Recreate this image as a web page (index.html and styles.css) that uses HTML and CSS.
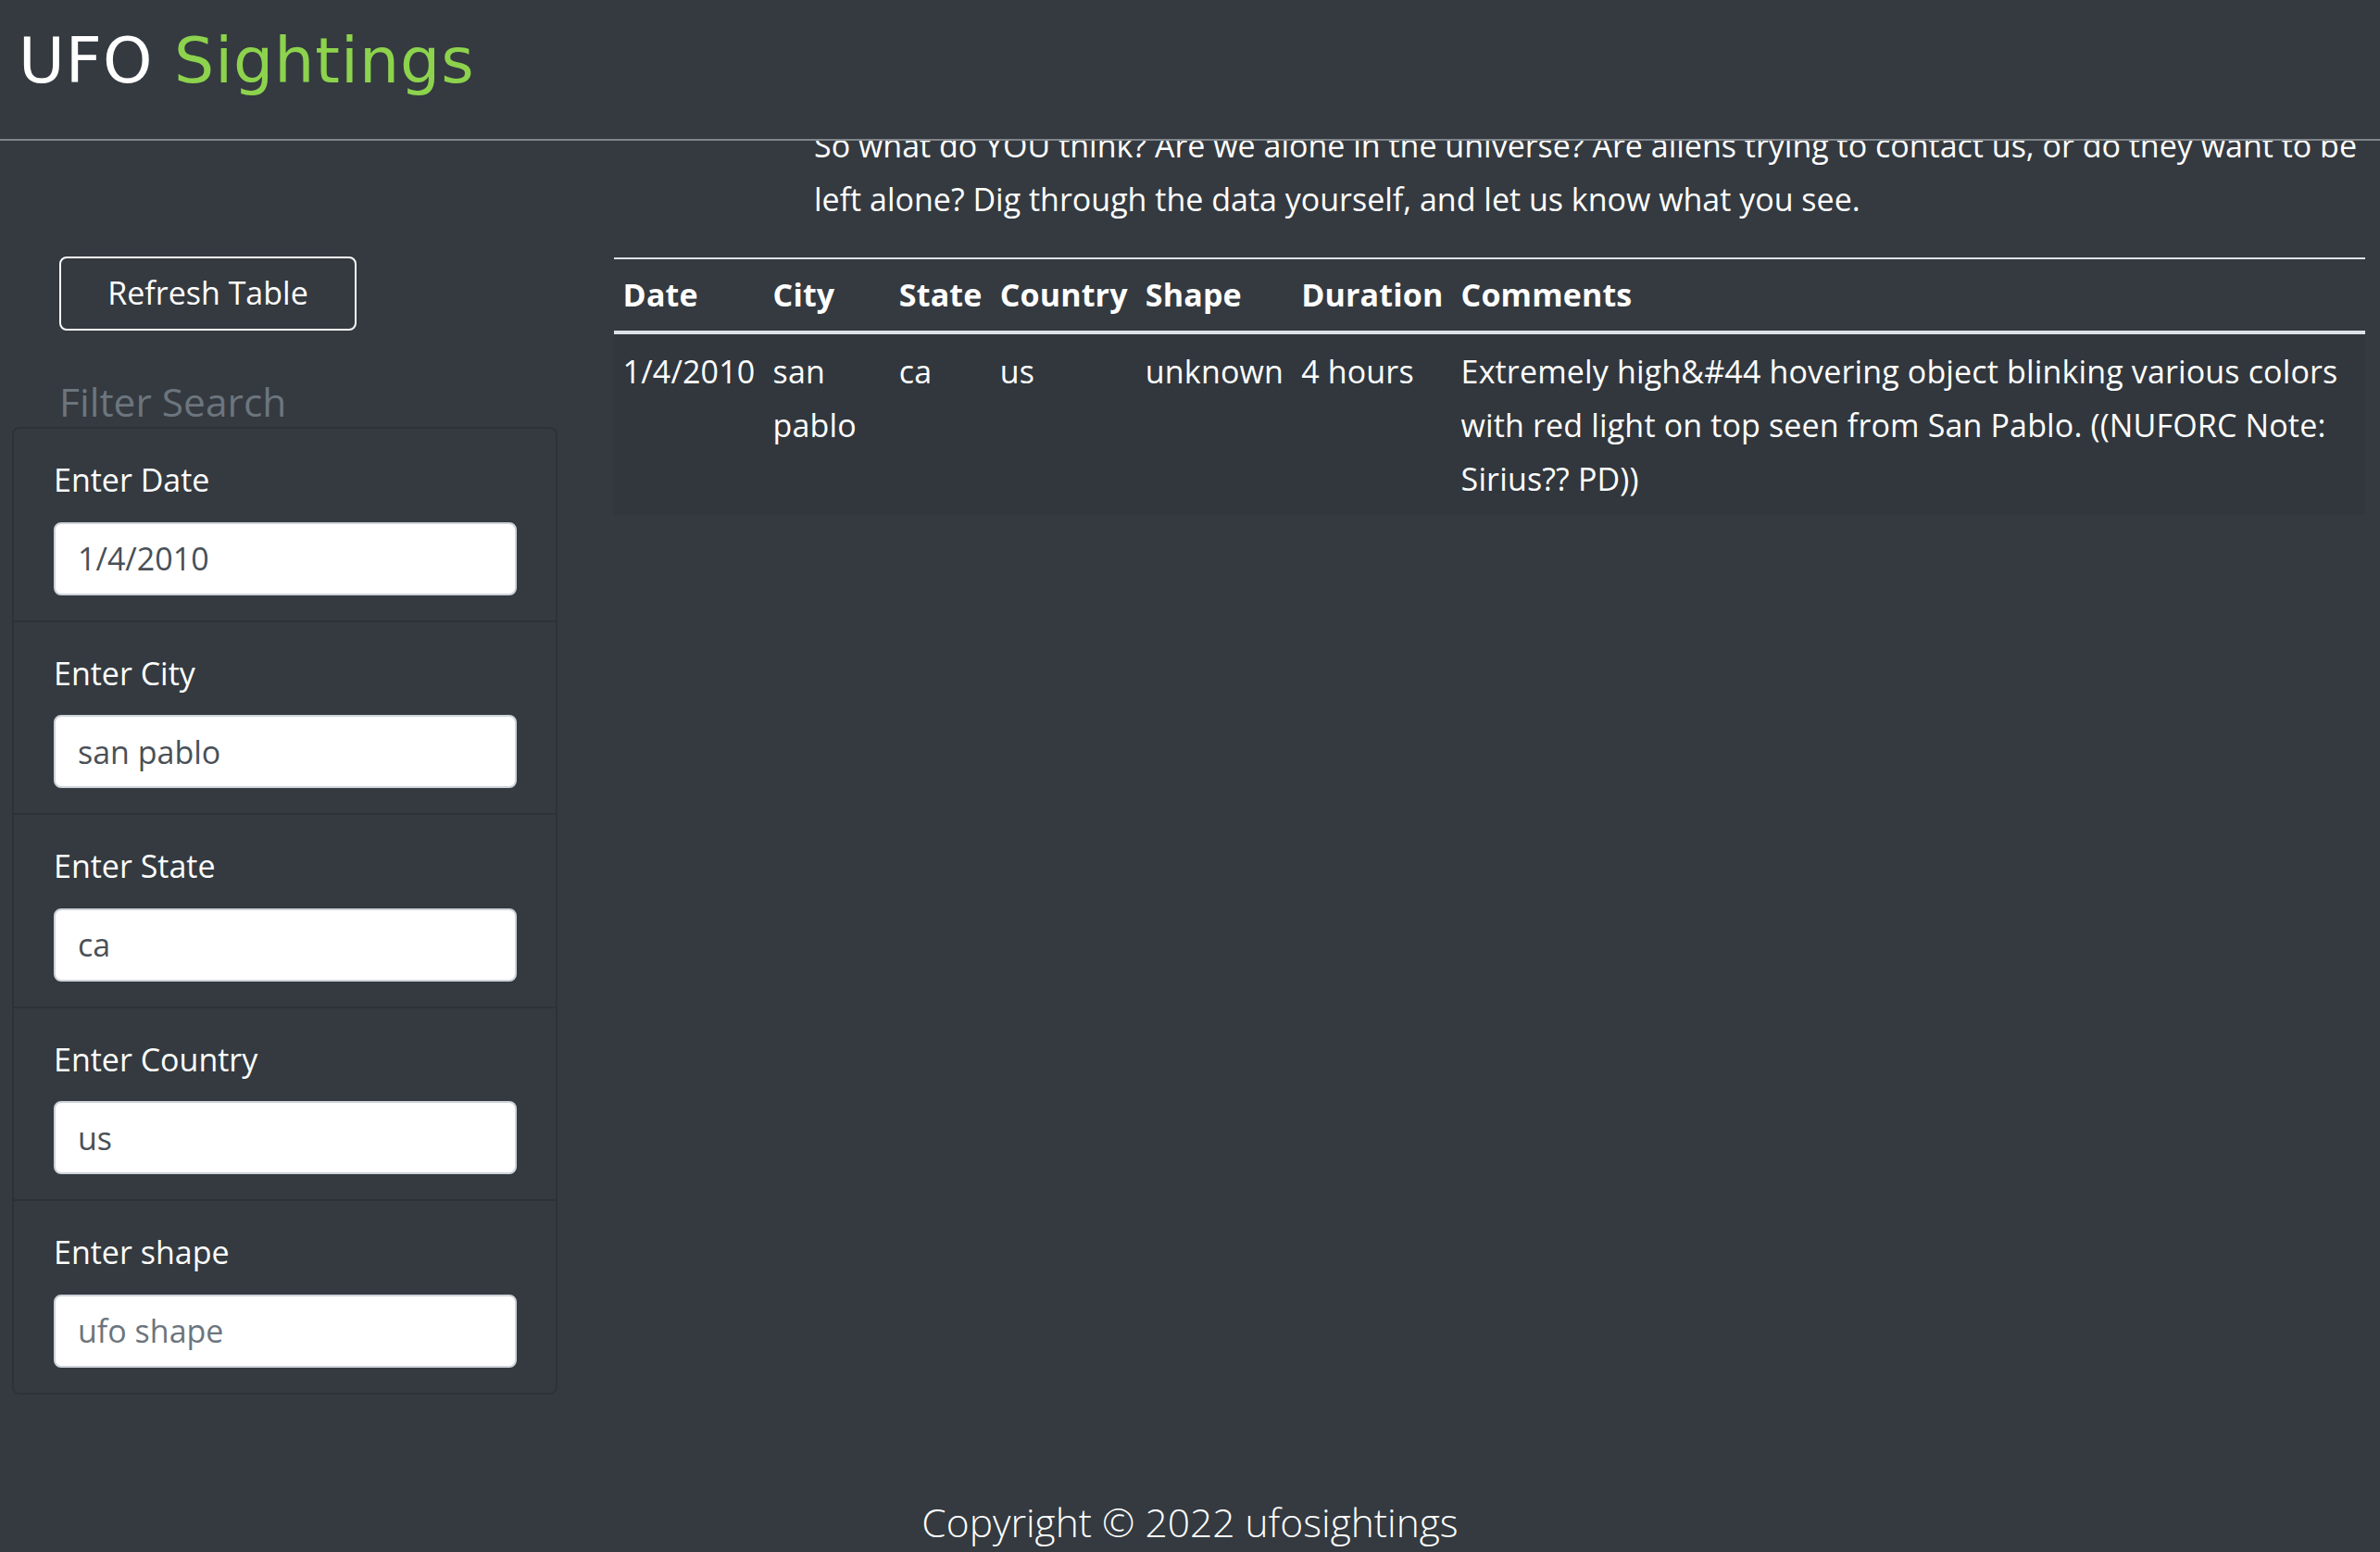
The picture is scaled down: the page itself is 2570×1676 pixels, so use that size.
FILE: index.html
```html
<!DOCTYPE html>
<html lang="en">
<head>
<meta charset="utf-8">
<title>UFO Sightings</title>
<link rel="stylesheet" href="styles.css">
</head>
<body>
<header class="topbar">
  <h1 class="brand">UFO <span class="brand-accent">Sightings</span></h1>
</header>

<main class="layout">
  <aside class="sidebar">
    <button class="btn-refresh" type="button">Refresh Table</button>
    <h4 class="filter-title">Filter Search</h4>
    <ul class="filter-list">
      <li class="filter-item">
        <label class="filter-label" for="datetime">Enter Date</label>
        <input class="filter-input" id="datetime" type="text" value="1/4/2010">
      </li>
      <li class="filter-item">
        <label class="filter-label" for="city">Enter City</label>
        <input class="filter-input" id="city" type="text" value="san pablo">
      </li>
      <li class="filter-item">
        <label class="filter-label" for="state">Enter State</label>
        <input class="filter-input" id="state" type="text" value="ca">
      </li>
      <li class="filter-item">
        <label class="filter-label" for="country">Enter Country</label>
        <input class="filter-input" id="country" type="text" value="us">
      </li>
      <li class="filter-item">
        <label class="filter-label" for="shape">Enter shape</label>
        <input class="filter-input" id="shape" type="text" placeholder="ufo shape">
      </li>
    </ul>
  </aside>

  <section class="content">
    <p class="intro">So what do YOU think? Are we alone in the universe? Are aliens trying to contact us, or do they want to be left alone? Dig through the data yourself, and let us know what you see.</p>
    <table class="ufo-table">
      <thead>
        <tr>
          <th>Date</th>
          <th>City</th>
          <th>State</th>
          <th>Country</th>
          <th>Shape</th>
          <th>Duration</th>
          <th>Comments</th>
        </tr>
      </thead>
      <tbody>
        <tr>
          <td>1/4/2010</td>
          <td>san pablo</td>
          <td>ca</td>
          <td>us</td>
          <td>unknown</td>
          <td>4 hours</td>
          <td>Extremely high&amp;#44 hovering object blinking various colors with red light on top seen from San Pablo. ((NUFORC Note: Sirius?? PD))</td>
        </tr>
      </tbody>
    </table>
  </section>
</main>

<footer class="footer">Copyright © 2022 ufosightings</footer>
</body>
</html>
```

FILE: styles.css
```css
* {
  box-sizing: border-box;
}

html, body {
  margin: 0;
  padding: 0;
}

body {
  background: #343a40;
  color: #ffffff;
  font-family: "Open Sans", "Liberation Sans", sans-serif;
  font-size: 34px;
  line-height: 57.6px;
  padding-top: 129px;
  min-height: 1676px;
}

.topbar {
  position: fixed;
  top: 0;
  left: 0;
  right: 0;
  height: 152px;
  background: #343a40;
  border-bottom: 2px solid #80858a;
  padding: 32px 0 0 20px;
  z-index: 10;
}

.brand {
  margin: 0;
  font-family: "DejaVu Sans", "Liberation Sans", sans-serif;
  font-weight: 400;
  font-size: 68px;
  line-height: 1;
  letter-spacing: 1px;
  color: #ffffff;
}

.brand-accent {
  color: #8dd34d;
}

.layout {
  display: flex;
  align-items: flex-start;
}

.sidebar {
  width: 662px;
  flex: none;
  padding: 148px 0 0 13px;
}

.btn-refresh {
  display: block;
  margin-left: 51px;
  width: 321px;
  height: 80px;
  background: transparent;
  border: 2px solid #f8f9fa;
  border-radius: 8px;
  color: #ffffff;
  font-family: "Open Sans", "Liberation Sans", sans-serif;
  font-size: 34px;
  line-height: 57.6px;
  padding: 0;
}

.filter-title {
  margin: 49px 0 0 51px;
  font-size: 42.5px;
  font-weight: 400;
  line-height: 55px;
  color: #6c757d;
}

.filter-list {
  list-style: none;
  margin: 0;
  padding: 0;
  width: 589px;
  border: 2px solid rgba(0, 0, 0, 0.13);
  border-radius: 8px;
}

.filter-item {
  display: flex;
  flex-direction: column;
  align-items: flex-start;
  padding: 27px 42px 27px 43px;
}

.filter-item + .filter-item {
  border-top: 2px solid rgba(0, 0, 0, 0.13);
}

.filter-label {
  display: block;
  margin-bottom: 16px;
  color: #ffffff;
}

.filter-input {
  width: 500px;
  height: 79px;
  border: 2px solid #ced4da;
  border-radius: 8px;
  background: #ffffff;
  color: #495057;
  font-family: "Open Sans", "Liberation Sans", sans-serif;
  font-size: 34px;
  padding: 0 24px;
  outline: none;
}

.filter-input::placeholder {
  color: #6c757d;
  opacity: 1;
}

.content {
  flex: 1;
  min-width: 0;
  padding-left: 1px;
  margin-right: 16px;
}

.intro {
  margin: 0 0 34px 216px;
}

.ufo-table {
  width: 100%;
  border-collapse: collapse;
  color: #ffffff;
  letter-spacing: 0.15px;
}

.ufo-table th,
.ufo-table td {
  padding: 9.6px;
  text-align: left;
  vertical-align: top;
}

.ufo-table td {
  padding-top: 12.5px;
}

.ufo-table th {
  font-weight: 700;
  border-top: 2px solid #dee2e6;
  border-bottom: 4px solid #dee2e6;
}

.ufo-table tbody tr {
  background: rgba(0, 0, 0, 0.04);
}

.footer {
  margin-top: 106px;
  text-align: center;
  font-weight: 300;
  font-size: 42.5px;
  line-height: 63px;
  color: #ffffff;
}
```
